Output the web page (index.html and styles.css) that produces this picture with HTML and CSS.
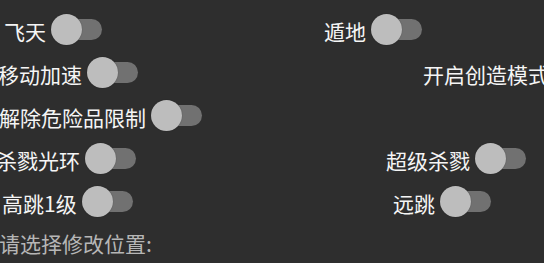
FILE: index.html
```html
<!DOCTYPE html>
<html lang="zh">
<head>
<meta charset="utf-8">
<title>设置</title>
<link rel="stylesheet" href="styles.css">
</head>
<body>
<main class="panel">
  <div class="row">
    <div class="cell"><label class="item x-fly"><span class="txt">飞天</span><span class="sw"></span></label></div>
    <div class="cell"><label class="item x-dig"><span class="txt">遁地</span><span class="sw"></span></label></div>
  </div>
  <div class="row">
    <div class="cell"><label class="item x-speed"><span class="txt">移动加速</span><span class="sw"></span></label></div>
    <div class="cell"><label class="item x-create"><span class="txt">开启创造模式</span><span class="sw"></span></label></div>
  </div>
  <div class="row">
    <div class="cell"><label class="item x-danger"><span class="txt">解除危险品限制</span><span class="sw"></span></label></div>
    <div class="cell"></div>
  </div>
  <div class="row">
    <div class="cell"><label class="item x-aura"><span class="txt">杀戮光环</span><span class="sw"></span></label></div>
    <div class="cell"><label class="item x-super"><span class="txt">超级杀戮</span><span class="sw"></span></label></div>
  </div>
  <div class="row">
    <div class="cell"><label class="item x-high"><span class="txt">高跳1级</span><span class="sw"></span></label></div>
    <div class="cell"><label class="item x-far"><span class="txt">远跳</span><span class="sw"></span></label></div>
  </div>
  <p class="hint">请选择修改位置:</p>
</main>
</body>
</html>
```
FILE: styles.css
```css
html, body {
  margin: 0;
  padding: 0;
  background: #2e2e2e;
  width: 544px;
  height: 263px;
  overflow: hidden;
}

.panel {
  padding-top: 8px;
  font-family: "Noto Sans CJK SC", "Noto Sans", sans-serif;
  font-size: 21px;
  color: #f5f5f5;
}

.row {
  display: grid;
  grid-template-columns: 272px 272px;
  height: 43px;
}

.cell {
  display: flex;
  align-items: center;
  white-space: nowrap;
  min-width: 0;
}

.item {
  display: flex;
  align-items: center;
  gap: 5px;
  flex: none;
}

.txt {
  line-height: 30px;
  position: relative;
  top: 1px;
}

.sw {
  position: relative;
  width: 51px;
  height: 31px;
  flex: none;
}

.sw::before {
  content: "";
  position: absolute;
  left: 4px;
  top: 5px;
  width: 47px;
  height: 21px;
  border-radius: 10.5px;
  background: #717171;
}

.sw::after {
  content: "";
  position: absolute;
  left: 0;
  top: 0;
  width: 31px;
  height: 31px;
  border-radius: 50%;
  background: #bdbdbd;
  box-shadow: 0 0 1px rgba(0, 0, 0, 0.5);
}

.x-fly { margin-left: 4px; }
.x-speed { margin-left: -2px; }
.x-danger { margin-left: -1px; }
.x-aura { margin-left: -4px; }
.x-high { margin-left: 2px; }
.x-dig { margin-left: 52px; }
.x-create { margin-left: 151px; }
.x-super { margin-left: 114px; }
.x-far { margin-left: 121px; }

.hint {
  margin: 0 0 0 -1px;
  height: 40px;
  line-height: 40px;
  color: #b6b6b6;
}
```
